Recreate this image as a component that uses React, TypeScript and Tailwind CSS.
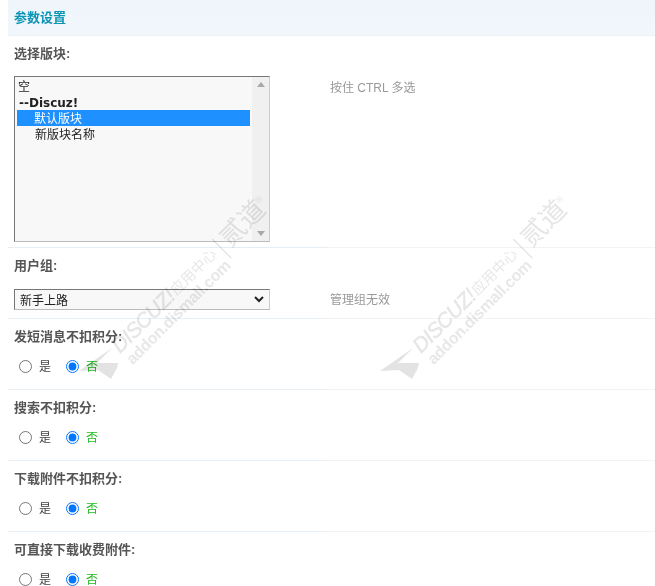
// App.tsx
import React from 'react';

const fontStack = '[font-family:"Liberation_Sans","Noto_Sans_CJK_SC",sans-serif]';

// 水印
const Watermark: React.FC<{ className: string }> = ({ className }) => (
  <svg
    className={`absolute pointer-events-none mix-blend-multiply ${className}`}
    width="210"
    height="200"
    viewBox="0 0 210 200"
  >
    <polygon points="5,181 38,158 23,173 44,173 43,178 37,189 24,180" fill="#e3e3e3" />
    <g transform="translate(46,164) rotate(-45)" fill="#e6e6e6" fontFamily="'Liberation Sans','Noto Sans CJK SC',sans-serif">
      <text x="0" y="0" fontSize="21" fontStyle="italic" textLength="80" stroke="#e6e6e6" strokeWidth="0.4">
        DISCUZ!
      </text>
      <text x="81" y="-1" fontSize="14.5" textLength="58" fill="#e8e8e8">
        应用中心
      </text>
      <rect x="146" y="-16" width="1" height="27" fill="#dcdcdc" />
      <text x="153" y="3" fontSize="26" textLength="52">
        贰道
      </text>
      <text x="204" y="-8" fontSize="9">
        ®
      </text>
      <text x="1" y="17" fontSize="16" fontWeight="700" textLength="140" fill="#e8e8e8">
        addon.dismall.com
      </text>
    </g>
  </svg>
);

const Row: React.FC<{ label: string; tip?: string; children: React.ReactNode }> = ({ label, tip, children }) => (
  <div className="ml-2 flex">
    <div className="w-[319px] shrink-0 border-b border-[#e6eef4]">
      <div className="pl-[6px] h-9 flex items-center text-[13px] font-bold text-[#555]">{label}</div>
      <div className="pl-[6px]">{children}</div>
    </div>
    <div className="flex-1 border-b border-[#f3f3f3] relative">
      {tip && <div className="absolute left-[3px] bottom-[10px] text-xs text-[#999]">{tip}</div>}
    </div>
  </div>
);

const RadioPair: React.FC<{ name: string }> = ({ name }) => (
  <div className="h-[34px] pt-[4px] flex items-start pl-[5px] text-xs text-[#444]">
    <label className="flex items-center h-[14px]">
      <input type="radio" name={name} className="w-[13px] h-[13px] m-0" />
      <span className="ml-[7px] mt-[2px]">是</span>
    </label>
    <label className="flex items-center h-[14px] ml-[15px] text-[#1fbb1f]">
      <input type="radio" name={name} defaultChecked className="w-[13px] h-[13px] m-0" />
      <span className="ml-[7px] mt-[2px]">否</span>
    </label>
  </div>
);

export default function App() {
  return (
    <div className={`relative w-[655px] h-[586px] overflow-hidden bg-white ${fontStack}`}>
      <div className="ml-2 h-9 flex items-center pl-[6px] border-b border-[#eaf1f7] bg-gradient-to-b from-[#eef5fb] to-[#f2f7fc] text-[13px] font-bold text-[#0a95b5]">
        参数设置
      </div>

      <div className="ml-2 flex">
        <div className="w-[319px] shrink-0 border-b border-[#e6eef4]">
          <div className="pl-[6px] h-9 flex items-center text-[13px] font-bold text-[#555]">选择版块:</div>
          <div className="pl-[6px] pt-1 h-[175px]">
            <div className="w-[256px] h-[166px] flex border border-[#777] border-r-[#ccc] border-b-[#bbb] bg-[#f8f8f8] text-xs text-[#222]">
              <div className="flex-1 pl-[2px] pt-[1px]">
                <div className="h-4 leading-[18px] pl-[1px]">空</div>
                <div className="h-4 leading-[18px] pl-[2px] font-bold font-['DejaVu_Sans']">--Discuz!</div>
                <div className="h-4 leading-[18px] bg-[#1e90ff] text-white pl-[17px] w-[233px]">默认版块</div>
                <div className="h-4 leading-[18px] pl-[18px]">新版块名称</div>
              </div>
              <div className="w-[17px] bg-[#f0f0f0] flex flex-col justify-between items-center py-[5px]">
                <svg width="8" height="5" viewBox="0 0 8 5">
                  <polygon points="4,0 8,5 0,5" fill="#a8a8a8" />
                </svg>
                <svg width="8" height="5" viewBox="0 0 8 5">
                  <polygon points="0,0 8,0 4,5" fill="#a8a8a8" />
                </svg>
              </div>
            </div>
          </div>
        </div>
        <div className="flex-1 border-b border-[#f3f3f3]">
          <div className="pl-[3px] pt-[44px] text-xs text-[#999]">按住 CTRL 多选</div>
        </div>
      </div>

      <Row label="用户组:" tip="管理组无效">
        <div className="h-[34px] pt-[5px]">
          <div className="relative w-[256px] h-[21px] border border-[#777] border-r-[#ccc] border-b-[#bbb] bg-[#f8f8f8] text-xs text-[#222]">
            <select
              defaultValue="新手上路"
              className="appearance-none w-full h-full pl-[5px] pt-[2px] bg-transparent outline-none"
            >
              <option>新手上路</option>
            </select>
            <svg className="absolute right-[5px] top-[6px]" width="10" height="7" viewBox="0 0 10 7" fill="none">
              <path d="M1 1l4 4 4-4" stroke="#222" strokeWidth="2" />
            </svg>
          </div>
        </div>
      </Row>

      <Row label="发短消息不扣积分:">
        <RadioPair name="r1" />
      </Row>
      <Row label="搜索不扣积分:">
        <RadioPair name="r2" />
      </Row>
      <Row label="下载附件不扣积分:">
        <RadioPair name="r3" />
      </Row>
      <Row label="可直接下载收费附件:">
        <RadioPair name="r4" />
      </Row>

      <Watermark className="left-[74px] top-[190px]" />
      <Watermark className="left-[375px] top-[190px]" />
    </div>
  );
}
